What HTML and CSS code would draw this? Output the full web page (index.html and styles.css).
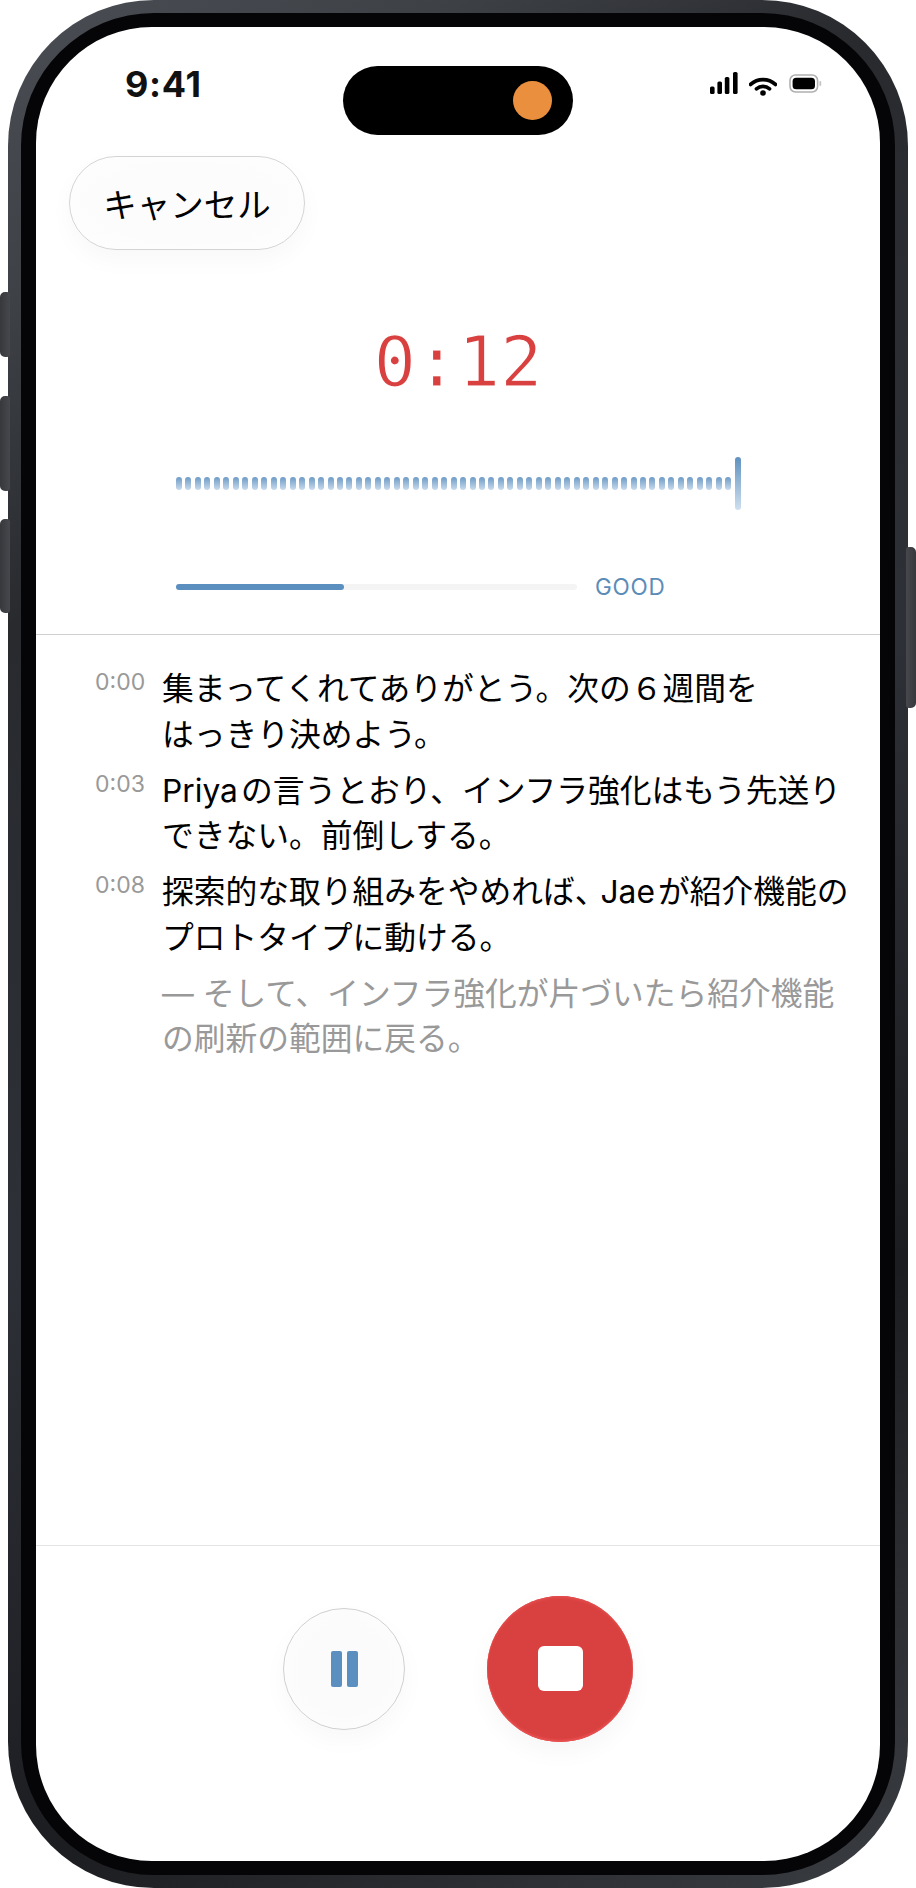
FILE: index.html
```html
<!DOCTYPE html>
<html lang="ja">
<head>
<meta charset="utf-8">
<title>録音</title>
<link rel="stylesheet" href="styles.css">
</head>
<body>
<div class="device">
  <span class="side side-l1"></span>
  <span class="side side-l2"></span>
  <span class="side side-l3"></span>
  <span class="side side-r1"></span>
  <div class="bezel">
    <main class="screen">
      <div class="island"><span class="island-dot"></span></div>
      <header class="status">
        <span class="clock">9:41</span>
        <div class="status-icons">
          <svg class="ico-signal" width="28" height="22" viewBox="0 0 28 22"><rect x="0" y="14.5" width="4.6" height="7.5" rx="1.6"/><rect x="7.4" y="9.5" width="4.6" height="12.5" rx="1.6"/><rect x="14.8" y="5" width="4.6" height="17" rx="1.6"/><rect x="23" y="0" width="4.6" height="22" rx="1.6"/></svg>
          <svg class="ico-wifi" width="28" height="19" viewBox="0 0 28 19"><path d="M1.6 7.4C8.6 .9 19.4 .9 26.4 7.4" fill="none" stroke="#000" stroke-width="3.8" stroke-linecap="round"/><path d="M7.4 11.8C11.3 8.5 16.7 8.5 20.6 11.8" fill="none" stroke="#000" stroke-width="3.6" stroke-linecap="round"/><circle cx="14" cy="16" r="2.8"/></svg>
          <svg class="ico-batt" width="33" height="19" viewBox="0 0 33 19"><rect x="1" y="1" width="27.6" height="17" rx="5.4" fill="none" stroke="#b0b0b0" stroke-width="1.6"/><rect x="3.6" y="3.7" width="22.4" height="11.6" rx="3.6" fill="#000"/><rect x="30.4" y="7" width="1.8" height="5" rx=".9" fill="#c4c4c4"/></svg>
        </div>
      </header>

      <div class="top-bar">
        <button class="cancel" type="button">キャンセル</button>
      </div>

      <section class="meter">
        <div class="timer">0:12</div>
        <div class="wave">
          <span class="bar"></span><span class="bar"></span><span class="bar"></span><span class="bar"></span><span class="bar"></span><span class="bar"></span><span class="bar"></span><span class="bar"></span><span class="bar"></span><span class="bar"></span>
          <span class="bar"></span><span class="bar"></span><span class="bar"></span><span class="bar"></span><span class="bar"></span><span class="bar"></span><span class="bar"></span><span class="bar"></span><span class="bar"></span><span class="bar"></span>
          <span class="bar"></span><span class="bar"></span><span class="bar"></span><span class="bar"></span><span class="bar"></span><span class="bar"></span><span class="bar"></span><span class="bar"></span><span class="bar"></span><span class="bar"></span>
          <span class="bar"></span><span class="bar"></span><span class="bar"></span><span class="bar"></span><span class="bar"></span><span class="bar"></span><span class="bar"></span><span class="bar"></span><span class="bar"></span><span class="bar"></span>
          <span class="bar"></span><span class="bar"></span><span class="bar"></span><span class="bar"></span><span class="bar"></span><span class="bar"></span><span class="bar"></span><span class="bar"></span><span class="bar"></span><span class="bar"></span>
          <span class="bar"></span><span class="bar"></span><span class="bar"></span><span class="bar"></span><span class="bar"></span><span class="bar"></span><span class="bar"></span><span class="bar"></span><span class="bar"></span>
          <span class="bar bar-now"></span>
        </div>
        <div class="level">
          <div class="level-track"><div class="level-fill" style="width: 41.9%"></div></div>
          <span class="level-label">GOOD</span>
        </div>
      </section>

      <section class="transcript">
        <div class="line">
          <span class="stamp">0:00</span>
          <p class="words">集まってくれてありがとう。次の６週間を<br>はっきり決めよう。</p>
        </div>
        <div class="line">
          <span class="stamp">0:03</span>
          <p class="words"><span class="latin">Priya</span>の言うとおり、インフラ強化はもう先送り<br>できない。前倒しする。</p>
        </div>
        <div class="line">
          <span class="stamp">0:08</span>
          <p class="words">探索的な取り組みをやめれば<span class="comma-tight">、</span><span class="latin">Jae</span>が紹介機能の<br>プロトタイプに動ける。</p>
        </div>
        <div class="line">
          <span class="stamp"></span>
          <p class="words words-live">— そして、インフラ強化が片づいたら紹介機能<br>の刷新の範囲に戻る。</p>
        </div>
      </section>

      <footer class="controls">
        <button class="pause" type="button" aria-label="一時停止"><span class="pause-bar"></span><span class="pause-bar"></span></button>
        <button class="stop" type="button" aria-label="停止"><span class="stop-square"></span></button>
      </footer>
    </main>
  </div>
</div>
</body>
</html>
```

FILE: styles.css
```css
* { box-sizing: border-box; }

html, body {
  margin: 0;
  padding: 0;
  background: #fff;
}

body {
  width: 916px;
  height: 1888px;
  overflow: hidden;
  padding-left: 8px;
  font-family: "Inter", "Noto Sans CJK JP", sans-serif;
  color: #000;
}

.device {
  position: relative;
  width: 900px;
  height: 1888px;
  padding: 13px;
  border-radius: 146px;
  background: linear-gradient(145deg, #4a4d53 0%, #3e4146 12%, #282a2e 25%, #2d3036 50%, #1c1d21 75%, #3a3d42 100%);
}

.side {
  position: absolute;
  width: 10px;
  background: linear-gradient(90deg, #36383c, #46484d);
}

.side-l1 { left: -8px; top: 292px; height: 65px; border-radius: 5px 3px 3px 5px; }
.side-l2 { left: -8px; top: 396px; height: 95px; border-radius: 5px 3px 3px 5px; }
.side-l3 { left: -8px; top: 519px; height: 94px; border-radius: 5px 3px 3px 5px; }
.side-r1 { right: -8px; top: 547px; height: 161px; border-radius: 3px 5px 5px 3px; background: linear-gradient(90deg, #46484d, #36383c); }

.bezel {
  height: 100%;
  padding: 14px 15px;
  border-radius: 133px;
  background: #050507;
}

.screen {
  position: relative;
  height: 100%;
  display: flex;
  flex-direction: column;
  overflow: hidden;
  border-radius: 116px;
  background: #fff;
}

.island {
  position: absolute;
  left: 307px;
  top: 39px;
  width: 230px;
  height: 69px;
  border-radius: 35px;
  background: #000;
}

.island-dot {
  position: absolute;
  right: 21px;
  top: 15px;
  width: 39px;
  height: 39px;
  border-radius: 50%;
  background: #e98f3d;
}

.status {
  height: 129px;
  display: flex;
  justify-content: space-between;
  align-items: flex-start;
  padding: 36px 58px 0 89px;
  flex: none;
}

.clock {
  font-size: 36px;
  line-height: 42px;
  font-weight: 700;
  letter-spacing: .7px;
  color: #111;
}

.status-icons {
  display: flex;
  align-items: flex-start;
  gap: 11px;
  padding-top: 9px;
}

.ico-wifi { margin-top: 5px; }
.ico-batt { margin-top: 2px; margin-left: 1px; }

.top-bar {
  flex: none;
  padding-left: 33px;
  height: 94px;
}

.cancel {
  width: 236px;
  height: 94px;
  padding: 0;
  border: 1px solid #d4d4d4;
  border-radius: 47px;
  background: radial-gradient(ellipse at center, #fcfcfc 55%, #fefefe 100%);
  box-shadow: 0 10px 24px rgba(0, 0, 0, .03);
  font: 400 33.5px/1 "Noto Sans CJK JP", sans-serif;
  color: #000;
}

.meter {
  flex: none;
  height: 385px;
  border-bottom: 1px solid #cfcfcf;
  padding: 0 140px;
  display: flex;
  flex-direction: column;
}

.timer {
  margin-top: 70px;
  height: 84px;
  text-align: center;
  font: 400 70px/84px "DejaVu Sans Mono", monospace;
  color: #d94141;
  -webkit-text-stroke: 1.2px #fff;
  paint-order: fill stroke;
}

.wave {
  margin-top: 53px;
  height: 53px;
  display: flex;
  align-items: center;
  gap: 3.47px;
}

.bar {
  flex: none;
  width: 6px;
  height: 13px;
  border-radius: 3px;
  background: linear-gradient(180deg, #6c9ac6, #c9dbec);
}

.bar-now {
  height: 53px;
  border-radius: 3px;
  background: linear-gradient(180deg, #5f91bf, #cfe0ef);
}

.level {
  margin-top: 65px;
  display: flex;
  align-items: center;
  height: 24px;
  gap: 18px;
}

.level-track {
  flex: none;
  width: 401px;
  height: 6px;
  border-radius: 3px;
  background: #f4f4f4;
}

.level-fill {
  height: 100%;
  border-radius: 3px;
  background: #5b8fbf;
}

.level-label {
  font-size: 22.5px;
  line-height: 24px;
  font-weight: 400;
  letter-spacing: .8px;
  color: #5b8cb8;
}

.transcript {
  flex: 1;
  padding: 31px 0 0 59px;
  display: flex;
  flex-direction: column;
  gap: 10.5px;
  border-bottom: 1px solid #e4e4e4;
}

.line {
  display: flex;
  gap: 18px;
}

.stamp {
  flex: none;
  width: 49px;
  font-size: 23px;
  line-height: 32px;
  color: #999;
}

.words {
  margin: 0;
  font-size: 31.75px;
  line-height: 45.5px;
  white-space: nowrap;
  color: #000;
}

.latin { margin-right: 3px; }
.comma-tight { letter-spacing: -6px; }

.words-live { color: #999; }

.controls {
  flex: none;
  height: 315px;
  padding-bottom: 70px;
  display: flex;
  align-items: center;
  justify-content: center;
  gap: 82px;
}

.pause {
  width: 122px;
  height: 122px;
  padding: 0;
  display: flex;
  align-items: center;
  justify-content: center;
  gap: 5px;
  border: 1px solid #d0d0d0;
  border-radius: 50%;
  background: radial-gradient(circle at center, #fbfbfb 50%, #fefefe 100%);
  box-shadow: 0 10px 24px rgba(0, 0, 0, .03);
}

.pause-bar {
  width: 11px;
  height: 36px;
  border-radius: 2px;
  background: #5b8fbf;
}

.stop {
  width: 146px;
  height: 146px;
  padding: 0;
  display: flex;
  align-items: center;
  justify-content: center;
  border: 0;
  border-radius: 50%;
  background: #d94141;
  box-shadow: inset 0 -2px 2px #ea5050, inset 0 2px 2px #e34c4c, 0 10px 24px rgba(0, 0, 0, .04);
}

.stop-square {
  width: 45px;
  height: 45px;
  border-radius: 6px;
  background: #fff;
}
```
